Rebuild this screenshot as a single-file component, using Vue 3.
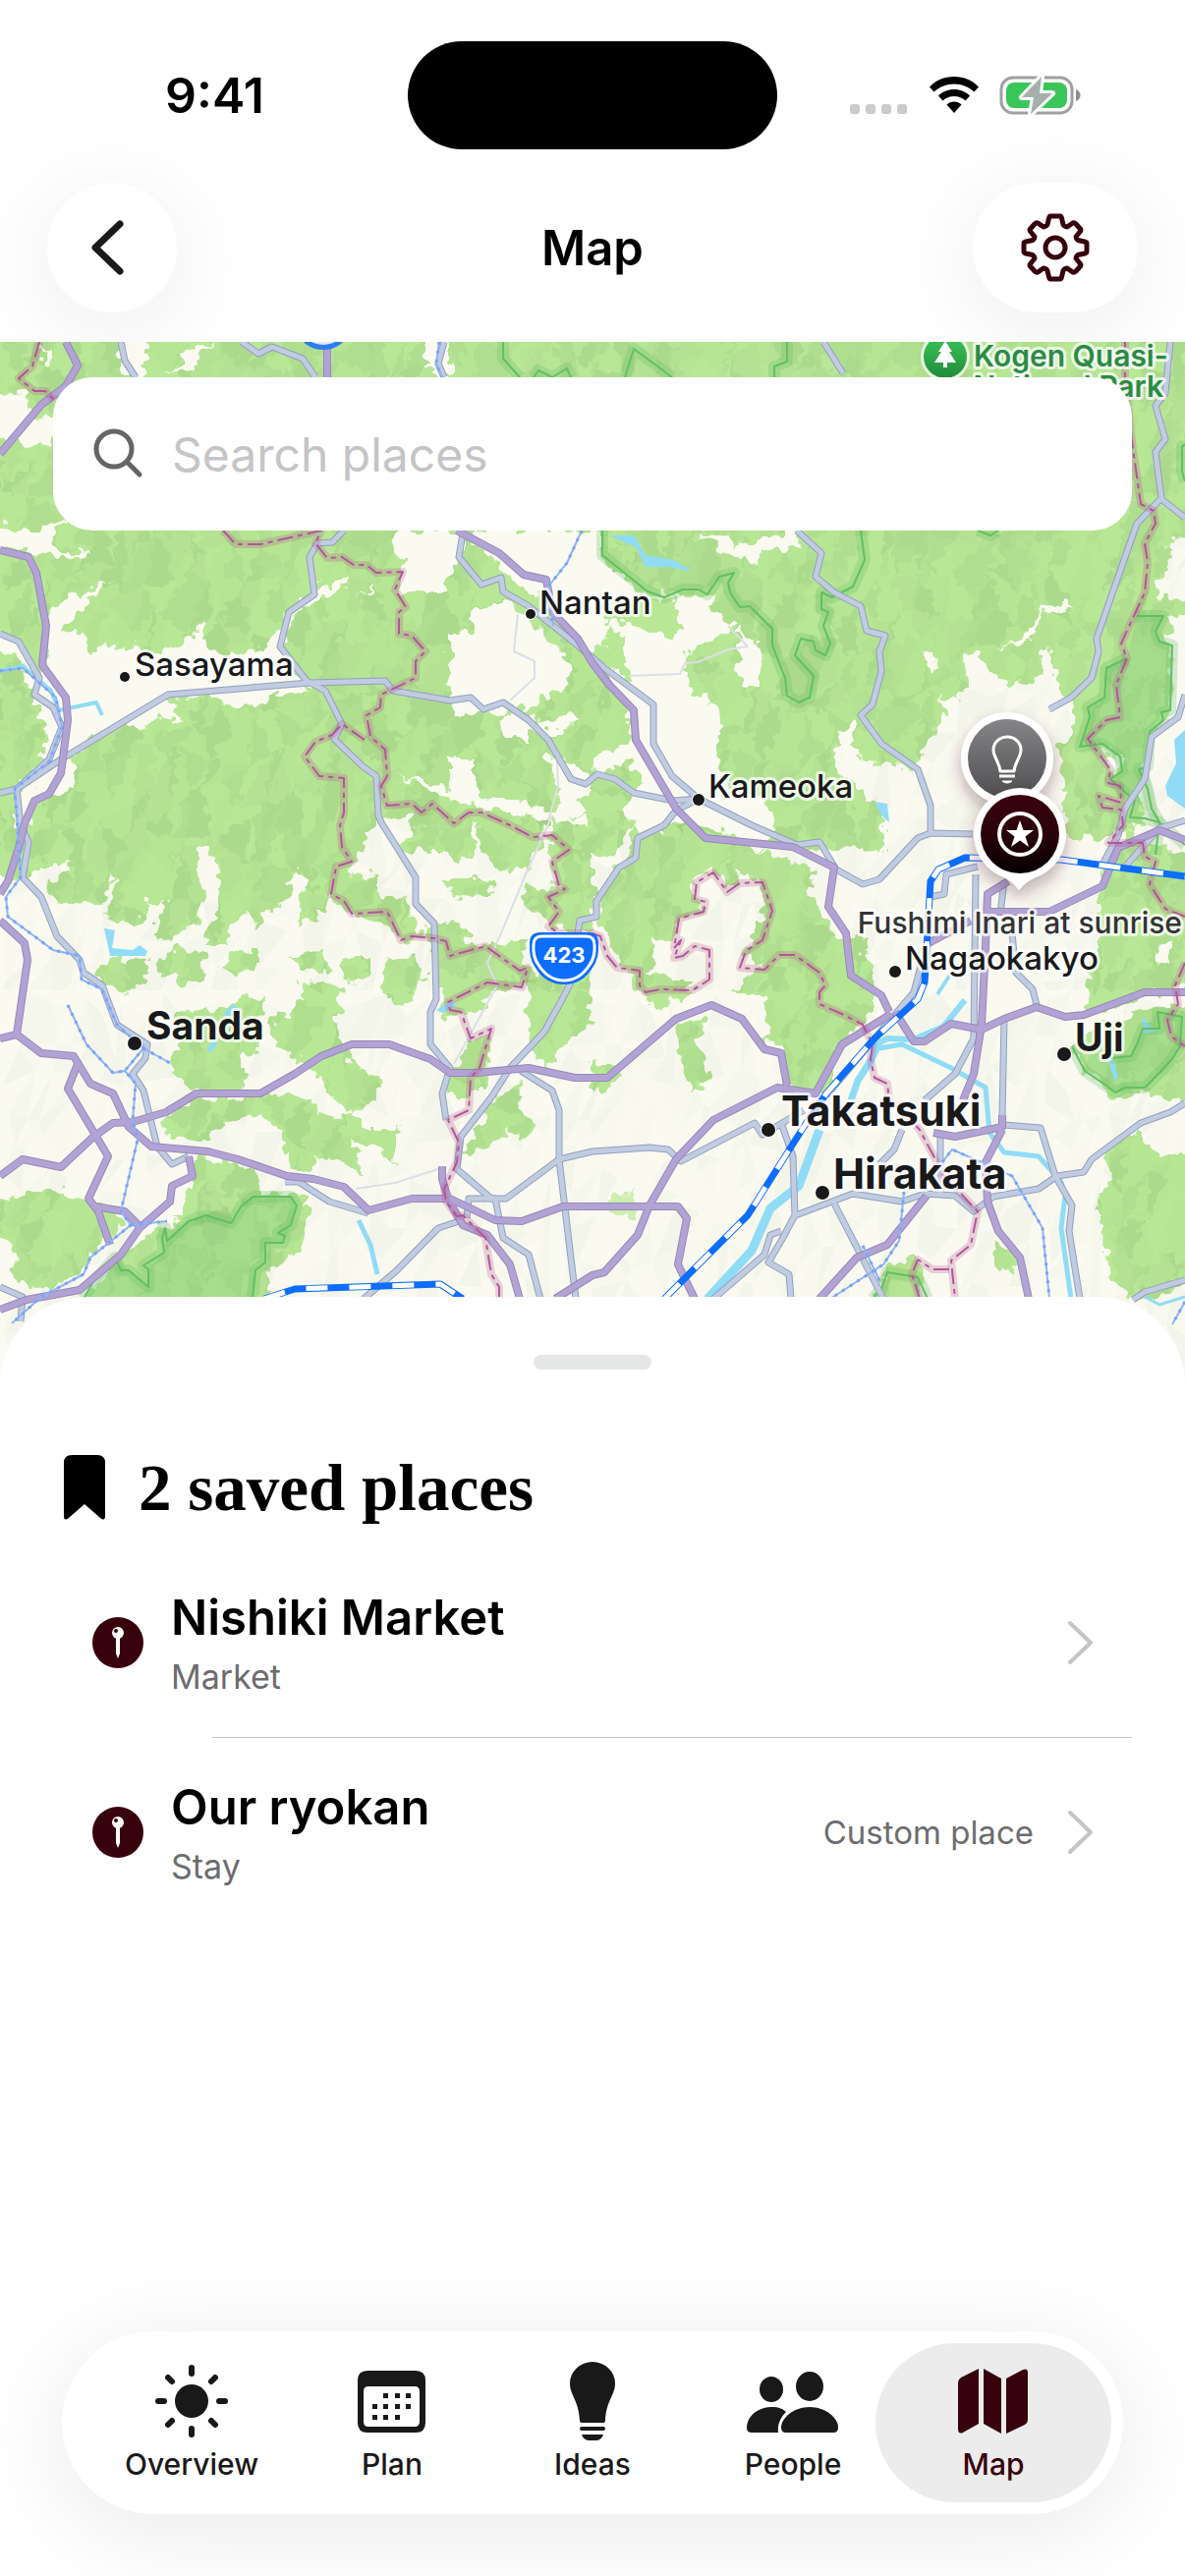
<script setup>
import { ref } from 'vue'

const query = ref('')
const activeTab = ref('map')

const tabs = [
  { id: 'overview', label: 'Overview' },
  { id: 'plan', label: 'Plan' },
  { id: 'ideas', label: 'Ideas' },
  { id: 'people', label: 'People' },
  { id: 'map', label: 'Map' }
]

const places = [
  { id: 1, name: 'Nishiki Market', kind: 'Market', note: '' },
  { id: 2, name: 'Our ryokan', kind: 'Stay', note: 'Custom place' }
]

const towns = [
  { name: 'Nantan', x: 549, y: 625, dx: 540, dy: 625, r: 5, size: 'sm' },
  { name: 'Sasayama', x: 137, y: 688, dx: 127, dy: 689, r: 5, size: 'sm' },
  { name: 'Kameoka', x: 721, y: 812, dx: 711, dy: 814, r: 6, size: 'sm' },
  { name: 'Nagaokakyo', x: 921, y: 987, dx: 911, dy: 989, r: 6, size: 'sm' },
  { name: 'Sanda', x: 149, y: 1058, dx: 137, dy: 1062, r: 7, size: 'md' },
  { name: 'Uji', x: 1094, y: 1070, dx: 1083, dy: 1073, r: 7, size: 'md' },
  { name: 'Takatsuki', x: 795, y: 1146, dx: 782, dy: 1150, r: 7, size: 'lg' },
  { name: 'Hirakata', x: 848, y: 1210, dx: 837, dy: 1214, r: 7, size: 'lg' }
]

// forest areas
const forest = [
  'M-20 328H1226V545L1190 550L1192 570L1180 590L1176 608L1206 610V625L1192 630L1190 660L1192 720L1180 735L1175 755L1168 770L1160 800L1165 830L1150 850L1135 845L1120 855L1108 850L1098 858L1085 845L1082 790L1078 757L1091 750V717L1078 700L1065 657L1057 673L1055 693L1026 697L1000 670L985 665L982 700L972 713L955 710L963 730L951 747L941 757L938 773L925 783L905 776L880 777L868 767L857 750L850 785L870 800L899 822V868L870 863L830 865L790 855L770 868L718 860L711 845L645 833L640 850L620 870L603 868V840L560 835L540 850L500 835L460 840L430 830L385 835L375 850L360 880L340 900L335 917L325 933L304 940L302 917L317 897L302 887L292 897L296 908L279 927H269L262 947L254 927L233 943L231 958H210L213 940L223 930V890L212 860H202V885L210 910L204 920L200 940L175 953L158 960V930L171 919H152V925L140 940H127L109 932L112 910L119 893L115 890L104 919L56 918L50 902L63 885L77 875L58 880H40L29 892L-20 893Z',
  'M645 833L711 840L718 860L757 863L800 873L833 890L818 907L841 933L849 957L884 953L878 967L888 987L891 1017L887 1030L868 1050L849 1070V1110L811 1113L801 1093L795 1063L776 1060L784 1043L776 1017L745 1010L775 985L756 970L780 930L772 900L760 885L742 905L726 885L705 900L715 930L690 935L685 960L660 955L668 975L655 990L705 1000L700 1012L672 1028L645 1005L625 970L610 940L615 900L640 873Z',
  'M177 1033L200 1025L215 1033L240 1020L268 1013L267 1063L246 1077V1110L215 1113L190 1105L175 1085L173 1073L185 1060Z',
  'M96 987L112 977L150 973V1000L127 1010L104 1003Z',
  'M158 988L175 965L208 970L205 995L188 1003L172 992Z',
  'M227 985L240 968H262V985L240 993Z',
  'M304 1000L346 1003L342 1047L358 1083L390 1100L380 1120L358 1133L335 1117L319 1090L277 1063L275 1037L308 1020Z',
  'M292 973L327 970L338 990L312 987Z',
  'M165 1143L192 1117L246 1120L269 1113L315 1117L327 1137L358 1133L377 1150L408 1150L400 1183L377 1163H358L369 1193L338 1180L319 1177L315 1193L292 1190L285 1150L265 1137L231 1140L208 1163L169 1157Z',
  'M196 1180L215 1178L262 1193L265 1213L240 1240L210 1245L180 1240L196 1205Z',
  'M-20 1217L12 1220L30 1212L69 1213L85 1222L119 1230L123 1245L85 1290L60 1310L35 1312L15 1300L12 1265L-20 1250Z',
  'M80 1332L119 1280L165 1247L208 1237L254 1220L277 1213L312 1217L315 1240L300 1277L277 1290L270 1332Z',
  'M338 887L385 890V913L412 915L423 937L430 953L408 957L385 937L358 933L338 915Z',
  'M350 977L377 970V993L354 1000Z',
  'M392 977L425 973L433 997L412 1023L390 1017Z',
  'M433 945L462 937L480 960L538 957L530 977L550 1000L500 1010L485 1030L450 1035L442 990Z',
  'M452 893H500L502 910L470 913L452 905Z',
  'M419 830H480L484 863L465 883L454 867L410 867Z',
  'M485 830H560L540 880L515 888L490 870Z',
  'M560 835L603 840V950L562 945L531 917L535 903L565 905L560 860Z',
  'M535 990H600V1040L580 1060L555 1090L540 1070L535 1020Z',
  'M477 1063L500 1050L496 1100L477 1120L455 1113L458 1095Z',
  'M500 1120L531 1100L527 1130L546 1145L533 1163L520 1150L481 1177L470 1170L490 1143Z',
  'M688 1043L718 1037L710 1065L722 1097L703 1117L695 1083Z',
  'M603 1080L630 1085L625 1105L603 1115Z',
  'M1118 893L1135 870L1150 850L1226 880V1000L1170 1010L1130 1030H1105L1107 990L1120 940Z',
  'M1091 1060L1115 1045L1160 1030L1226 1020V1110L1190 1120L1170 1110L1135 1120L1105 1090Z',
  'M1122 1170L1153 1153L1180 1175L1226 1170V1290L1180 1322H1150L1126 1295L1117 1223L1130 1200Z',
  'M1014 1267L1037 1277L1030 1297L1010 1283Z',
  'M903 1290L937 1277L940 1332H888Z'
]

// open ground inside the forest
const clearings = [
  'M123 340H148V384H123Z',
  'M42 355H50L48 372L44 368Z',
  'M165 383L188 370L185 360L215 348L195 375Z',
  'M433 340H458V384H448L433 373Z',
  'M-20 403L25 398L28 420L60 430L50 450L30 455L15 445L-20 452Z',
  'M-20 532L23 540L42 537L69 528L50 553L62 562L92 564L80 568L54 565L29 562L-20 557Z',
  'M48 617L69 610L112 592L92 610L62 640L83 645L92 662L127 655L154 668L185 655L210 635L204 653L231 668L262 663L281 647L294 623L308 612L327 587L323 603L354 588L358 593L327 610L292 633L288 660L308 693L319 697L262 713L240 720L215 707L170 710L185 733L165 730L142 743L131 733L88 753L77 770L73 803L50 810L38 803L30 840H16L20 800L45 770L48 740L30 700L20 670L-20 650V643L18 653L42 690L50 660Z',
  'M408 540H473L465 573L454 587V605H408V567L400 552Z',
  'M480 540H612V570L650 603L690 606L728 605L725 622L749 640L703 660L697 675L702 700L728 717L733 735L730 770L740 800L782 815L790 842L770 868L740 848L700 835L655 850L635 822L655 795L640 775L603 790L602 770L640 760V720L603 670L575 640L545 605L520 590L500 570L480 550Z',
  'M481 620L500 615L527 615L546 640L584 675L575 700L530 722L488 727H458V645H481Z',
  'M710 545L745 565L770 573L775 560L817 560L810 540L790 545L765 555L735 548Z',
  'M752 640L776 660L772 697L757 699L752 680Z',
  'M1012 662L1040 648L1062 620L1085 613L1090 620L1065 625L1045 652Z',
  'M938 660L955 673L950 687L942 675Z',
  'M400 788L458 803V772H483V812L520 815L600 835V840L540 832L470 818Z',
  'M510 727L560 735L580 725L590 730L570 745H535V752H512Z',
  'M555 765L603 790V830H570L565 790Z',
  'M365 610L383 593L378 604L370 607Z',
  'M1125 765L1142 770L1138 790L1130 785Z',
  'M1180 960L1195 962L1190 985L1175 980Z',
  'M853 745L870 735L868 760L880 777L857 775Z'
]

const meadow = [
  'M618 1222L645 1210L652 1240L620 1236Z'
]

// wooded slopes that sit on top of the clearings
const groves = [
  'M612 622L628 612L660 608L690 610V645H668L645 640L632 632L618 632Z',
  'M516 612L545 604L560 590L548 640Z',
  'M484 592L500 562L512 590L530 600L532 612L500 612L484 618Z',
  'M612 655L622 635L638 652V680L622 676Z',
  'M603 655L612 660L645 680L640 690L603 672Z',
  'M585 815L603 808L640 812L632 828L600 835Z'
]

const parkFill = [
  'M85 1322L117 1280L131 1293L151 1310V1292L167 1275L170 1263L192 1243L210 1237L235 1245L258 1218L296 1218L302 1227L296 1247L288 1265H270V1285L260 1293L257 1322Z',
  'M1157 627H1184L1176 643L1180 653L1193 657L1191 723L1182 725L1170 745L1168 780L1180 837L1155 815L1130 793L1142 785L1122 757L1099 760L1109 730L1107 720L1124 710L1126 680L1147 670Z',
  'M1104 1090L1135 1112L1165 1107L1193 1078L1201 1065L1203 1035L1178 1030L1163 1047L1151 1075L1130 1077L1110 1070Z'
]

const parkLines = [
  'M512 348V365L529 384',
  'M543 384L548 377L562 384L577 375L581 384',
  'M636 384L645 355L668 372L684 384',
  'M801 348V368L788 373V384',
  'M613 540V565L659 602L676 608L695 600H711L720 605L732 587L747 583L741 593L743 603L753 618L763 617L786 640V657L799 690L801 708L813 715L824 710L828 688L809 667L815 650L828 653L830 662L840 667L845 655L838 637L843 623L836 620V603L847 608L868 597L880 570L876 540',
  'M995 540L1008 545L1016 540',
  'M1206 452L1203 455V480L1206 490',
  'M1157 627H1184L1176 643L1180 653L1193 657L1191 723L1182 725L1184 733L1170 745L1168 780L1159 783L1168 803L1172 823L1180 837L1206 860',
  'M1147 670L1126 680L1124 710L1107 720L1109 730L1099 760L1122 757L1140 770L1142 785L1130 793L1155 815L1150 832L1165 833L1180 837L1176 870',
  'M1091 1065L1104 1090L1126 1105L1135 1112L1145 1107H1165L1180 1092L1193 1078L1201 1065L1203 1035L1178 1030L1180 1047H1163L1157 1063L1151 1075L1130 1077',
  'M85 1322L96 1303L117 1280L123 1293H131L151 1310V1292L146 1288L167 1275L165 1260L168 1250L170 1263L192 1243L210 1237L235 1245L246 1227L258 1218H296L302 1227L296 1247L283 1255L290 1258L288 1265H270V1285L260 1293L257 1322',
  'M888 1322L897 1312L903 1295L934 1300L944 1322'
]

const lakes = [
  'M620 545H645L657 565L686 570L705 582L680 577H657L647 557Z',
  'M1206 743L1195 753L1197 777L1186 800L1188 810L1206 823Z',
  'M890 816L903 818L905 837L897 830Z',
  'M106 945L117 947L114 965L135 967L142 962L150 968L148 973L112 973Z',
  'M228 1030L238 1022L243 1028L232 1036Z',
  'M444 1028L460 1018L464 1024L450 1031Z',
  'M1162 1035L1178 1050L1164 1052Z'
]

const rivers = [
  { d: 'M720 1322L765 1273L784 1230L813 1207L834 1150', w: 9 },
  { d: 'M866 1120L873 1100L886 1080L895 1062', w: 7 },
  { d: 'M888 1065L903 1057L930 1058L960 1045L982 1018', w: 6 },
  { d: 'M895 1067L918 1063L968 1087L1003 1107L1007 1153L1022 1173L1057 1177L1080 1203L1084 1217L1080 1250L1090 1322', w: 5 },
  { d: 'M954 1012L967 992', w: 4 },
  { d: 'M365 1242L377 1267L384 1297', w: 5 },
  { d: 'M0 683L23 678L52 703L60 723L98 715L104 728', w: 4 },
  { d: 'M212 1070L220 1060', w: 5 },
  { d: 'M1130 1077L1136 1098', w: 5 },
  { d: 'M1165 1320L1180 1328L1206 1320', w: 3 }
]

const lanes = [
  'M562 830L535 890L510 950L496 980L506 1003L462 1083',
  'M446 1190L402 1204L362 1210',
  'M527 625L523 663L544 673V690L519 713',
  'M741 637L761 658L741 661L710 674L697 675L692 686L640 688',
  'M567 773L568 800L558 835'
]

const grayRoads = [
  'M123 348L127 367L138 384',
  'M246 348L263 360L277 353L308 365L321 384',
  'M452 348L446 370L452 384',
  'M350 540L338 552L323 553L315 567L320 605L294 623L285 658L312 693L331 703L348 737L340 752L369 780L383 790L385 830L388 837L423 893V920L442 940L444 1017L438 1030V1063L458 1087L450 1113L454 1140',
  'M0 807L17 803L62 773L171 707L315 695L392 693L400 703L458 713L479 710L492 722L512 715L538 733L558 753L581 793L596 798L608 788L626 793L645 807L685 815L711 813',
  'M0 645L19 653L40 690L35 707L54 720L63 740L50 773L17 803L21 840L29 857L23 893L42 913L58 953L81 977L85 990L104 1003L119 1043L150 1063L148 1077L135 1093L146 1110L160 1167L175 1185L192 1177',
  'M471 543L467 567L490 595L510 588L512 602L538 617L588 657L615 680L665 717V757L684 790L711 813L765 840L811 860L834 857L851 885L878 900L895 895L934 853L947 848L990 849',
  'M838 348L858 380',
  'M811 540L836 563L830 587L849 603L876 617L882 642L901 647L895 663L897 683L888 717L876 728L897 757L934 783L947 820V848',
  'M1191 348L1186 400L1176 413L1186 447L1176 460L1182 507L1157 533L1138 587L1116 650L1118 663L1111 690L1090 710L1068 722',
  'M1182 508L1206 527',
  'M1206 707L1199 730L1172 750L1165 793L1145 823L1138 850L1122 880',
  'M711 813L688 825L676 840L649 853L647 873L630 883L607 917V933L590 937L588 950',
  'M581 1000L569 1023L554 1050L519 1087L500 1117L469 1157L465 1190L500 1220H515L569 1180L603 1172L661 1168L680 1170L693 1182L768 1143L776 1155L818 1130',
  'M530 1090L562 1110L569 1130V1180L586 1322',
  'M475 1240L477 1220H504L512 1260L538 1277L550 1322',
  'M467 1243L446 1250L404 1293L370 1322',
  'M290 1203H304L335 1223L375 1235',
  'M795 1143L807 1177L809 1237L795 1263L782 1285L803 1297L805 1322',
  'M795 1253L784 1257L778 1277L726 1322',
  'M807 1238L868 1215L918 1223L941 1215L972 1217L991 1233L1011 1218L1057 1210L1076 1197L1103 1193L1111 1180L1161 1143L1191 1132L1206 1123',
  'M849 1225L899 1322',
  'M993 890L991 1057L972 1093L941 1120',
  'M918 1150L910 1170L895 1185',
  'M1022 1037L1020 1137',
  'M1022 1145L1059 1148L1074 1197L1091 1227L1088 1253L1099 1322',
  'M1018 930L1022 897',
  'M1030 950L1034 990L1051 1007L1055 1023',
  'M995 882L963 890L961 910L947 913',
  'M938 980L930 1010L841 1115',
  'M1153 1323L1165 1315L1206 1303',
  'M0 1310L23 1320L21 1345',
  'M957 1157V1215',
  'M1145 882L1180 843L1206 835'
]

const purpleRoads = [
  'M67 348L79 372L67 393L42 412L0 462',
  'M0 560L29 567L37 583L47 637L43 677L67 710L69 733L62 787L50 808L35 815L25 838L19 863L8 897L0 910',
  'M333 348V384',
  'M465 540L508 563L533 585L556 590L562 623L588 650L603 675L620 697L645 723L647 753L688 823L718 853L807 862L849 883L843 923L861 950L866 993L897 1013L905 1030',
  'M0 937L25 960L28 977L17 1053',
  'M0 1057L17 1053L42 1072L75 1075L92 1103L115 1113L131 1147L154 1167L212 1172L242 1180L292 1197L319 1200L350 1208L375 1232L419 1220H458L504 1242L531 1243L573 1228H690L699 1240L690 1287L707 1322',
  'M0 1197L23 1180L62 1188L94 1158L115 1143L135 1142L169 1132L200 1113H265L300 1093L327 1075L358 1063H396L438 1078L458 1092H485L538 1087L585 1097H618L688 1037L724 1023L755 1037L778 1068L795 1072L801 1105',
  'M79 1083L69 1108L110 1177L90 1220L100 1233L112 1267',
  'M96 1228L127 1233L142 1248',
  'M192 1177L196 1197L175 1207L173 1223L142 1250L123 1277L81 1313L27 1323L0 1333',
  'M565 1322L603 1298L615 1295L649 1257L661 1227L688 1180L726 1140L791 1107L830 1113L857 1063L907 1032',
  'M911 1030L930 1060H941L968 1042L999 1048L1022 1037L1055 1025L1084 1035L1103 1033L1165 1010H1206',
  'M1026 897L1005 910L1003 963L999 1043L991 1093L980 1120',
  'M1005 928H1068L1122 902L1138 863L1180 845L1206 855',
  'M988 937L945 960',
  'M950 1153L972 1157L1020 1147V1135',
  'M1020 1150L1003 1183L1005 1223L1016 1253L1038 1280L1047 1322',
  'M943 1217L903 1267L872 1280L834 1322',
  'M450 1187V1200L456 1220L471 1247L496 1257L519 1287L529 1322'
]

const borders = [
  'M40 348L33 373L19 385L35 398H46L55 407',
  'M227 540L240 554H265L327 540L321 553L333 568L348 567L360 575H373L383 583L410 582L402 600L413 618L406 623V645L419 647L433 663L423 673V690L388 707L387 720L373 728L377 750L392 763L394 790L388 800L394 820L419 818L429 827L440 818L462 838L477 827H490L519 840L542 852L562 850L579 865L562 877L569 902L575 905L558 913L569 928L558 943L569 950H603L611 953L618 973L628 985L651 988V1003L657 1010L672 1007L705 1008L722 997V967L707 963L695 973L686 975L693 957L686 965L691 935L716 928L718 918L707 915L709 898L726 888L740 908L753 899L776 898L786 927L776 957L759 968L753 985L778 987L793 972H809L834 990L840 1003L834 1010V1022L859 1033L878 1043L888 1063L886 1078L890 1097L903 1103L905 1120L918 1130L936 1150L961 1197L995 1233L988 1267L968 1283L972 1322',
  'M966 1292H949L934 1282L928 1297L936 1322',
  'M371 753L348 737L338 748L321 755L310 770L325 790L350 792V827L346 840L348 862L358 877L342 882L337 910L350 917L358 930L394 928L408 957L419 953L442 955L454 958L458 973L494 963L529 988L537 985L531 1005L496 1000L456 1020L458 1028L469 1030L479 1057L500 1047L488 1087L479 1097L477 1130L456 1140L467 1163L465 1183L452 1210L454 1223L465 1238L471 1237L494 1260L500 1297L508 1310V1322',
  'M1145 348V385L1153 457L1161 513L1174 520L1176 533L1165 553L1168 573L1165 603L1141 655L1147 670L1136 697L1140 730L1126 733L1107 752L1130 783L1128 797L1140 800L1141 817L1118 810L1122 822L1141 824L1143 840L1128 858H1163L1165 872L1176 877L1170 900L1186 925L1206 933',
  'M1206 980L1196 1003L1199 1022L1188 1038L1192 1055L1206 1065'
]

const dottedLines = [
  'M0 683L23 680L57 710L63 740L50 775L15 803L17 830L21 893L6 913L8 933L54 967L81 973L83 997L104 1007L119 1043L146 1067L127 1090L138 1103L135 1140L140 1160L123 1233L133 1247L92 1280L85 1297L42 1320L12 1347',
  'M69 1023L88 1063L115 1092L127 1090',
  'M146 1067L173 1082',
  'M133 1247L170 1243',
  'M592 540L577 573L558 597L563 637',
  'M447 348L444 370L450 384',
  'M920 1213L915 1263L899 1287L845 1322',
  'M878 1268L896 1305',
  'M959 1183L969 1170L1003 1185L1030 1197L1061 1250L1068 1322',
  'M1206 1325L1193 1348'
]

const railways = [
  'M269 1322L300 1312L448 1307L471 1322',
  'M676 1322L761 1237L818 1147L841 1113L890 1057L934 1017L941 1000L947 897L955 885L982 873L1080 875L1206 892'
]

// relief shading: a jittered grid of triangles, seeded so that every render is the same
const makeFacets = (cols, rows, cw, ch) => {
  let seed = 11
  const rnd = () => {
    seed = (seed * 16807) % 2147483647
    return seed / 2147483647
  }
  // grid points, with the last column and row wrapping onto the first
  const grid = []
  for (let r = 0; r < rows; r++) {
    grid.push([])
    for (let c = 0; c < cols; c++) {
      grid[r].push([rnd() * cw * 0.9, rnd() * ch * 0.9])
    }
  }
  const at = (r, c) => {
    const [jx, jy] = grid[r % rows][c % cols]
    return `${Math.round(c * cw + jx)} ${Math.round(r * ch + jy)}`
  }
  const list = []
  for (let r = 0; r < rows; r++) {
    for (let c = 0; c < cols; c++) {
      list.push({ d: `M${at(r, c)}L${at(r, c + 1)}L${at(r + 1, c)}Z`, tone: Math.floor(rnd() * 5) })
      list.push({ d: `M${at(r, c + 1)}L${at(r + 1, c + 1)}L${at(r + 1, c)}Z`, tone: Math.floor(rnd() * 5) })
    }
  }
  return list.filter((f) => f.tone > 0)
}
const facets = makeFacets(28, 14, 20, 36)
</script>

<template>
  <div class="page">
    <header class="top">
      <div class="status">
        <div class="status-side">9:41</div>
        <div class="island"></div>
        <div class="status-side status-icons">
          <svg width="60" height="40" viewBox="0 0 60 40" fill="#cbcacd">
            <rect v-for="n in 4" :key="n" :x="(n - 1) * 16" y="29" width="10" height="10" rx="3" />
          </svg>
          <svg width="52" height="40" viewBox="0 0 52 40">
            <path d="M26 1C16 1 7 5 1 11.500L5.500 16.500C11 11.500 18 8.500 26 8.500S41 11.500 46.500 16.500L51 11.500C45 5 36 1 26 1Z" />
            <path d="M26 14C19.500 14 14 16.500 10 20.500L14.500 25.500C17.500 22.500 21.500 21 26 21S34.500 22.500 37.500 25.500L42 20.500C38 16.500 32.500 14 26 14Z" />
            <path d="M26 26.500C23 26.500 20.500 27.500 18.500 29.500L26 38L33.500 29.500C31.500 27.500 29 26.500 26 26.500Z" />
          </svg>
          <svg width="84" height="44" viewBox="0 0 84 44">
            <rect x="2" y="4" width="72" height="36" rx="12" fill="#fff" stroke="#a0a0a0" stroke-width="3" />
            <rect x="7" y="9" width="62" height="26" rx="8" fill="#3ac659" />
            <path d="M78 16C84 18 84 26 78 28Z" fill="#8e8e90" />
            <path d="M43 3L23 24H35L32 41L54 20H41Z" fill="#a5b0aa" stroke="#fff" stroke-width="6" stroke-linejoin="round" paint-order="stroke" />
          </svg>
        </div>
      </div>
      <div class="toolbar">
        <button class="round-btn" aria-label="Back">
          <svg width="40" height="64" viewBox="0 0 40 64" fill="none" stroke="#1a1a1a" stroke-width="7" stroke-linecap="round" stroke-linejoin="round">
            <path d="M32 8L7 32L32 56" />
          </svg>
        </button>
        <h1>Map</h1>
        <button class="round-btn wide" aria-label="Settings">
          <svg width="72" height="72" viewBox="-36 -36 72 72" fill="none" stroke="#37020c" stroke-width="5" stroke-linejoin="round">
            <path d="M-5 -32H5Q6 -32 6.500 -30L8 -23.500Q9 -21.500 12 -21L17 -24.500Q19 -26 21 -24L25.500 -19Q26.500 -17.500 25 -16L21 -11Q21 -9 23 -7.500L30 -6Q32 -5.500 32 -4V4Q32 5.500 30 6L23 7.500Q21 9 21 11L25 16Q26.500 17.500 25.500 19L21 24Q19 26 17 24.500L12 21Q9 21.500 8 23.500L6.500 30Q6 32 5 32H-5Q-6 32 -6.500 30L-8 23.500Q-9 21.500 -12 21L-17 24.500Q-19 26 -21 24L-25.500 19Q-26.500 17.500 -25 16L-21 11Q-21 9 -23 7.500L-30 6Q-32 5.500 -32 4V-4Q-32 -5.500 -30 -6L-23 -7.500Q-21 -9 -21 -11L-25 -16Q-26.500 -17.500 -25.500 -19L-21 -24Q-19 -26 -17 -24.500L-12 -21Q-9 -21.500 -8 -23.500L-6.500 -30Q-6 -32 -5 -32Z" />
            <circle r="10" />
          </svg>
        </button>
      </div>
    </header>

    <section class="map">
      <svg class="map-canvas" viewBox="0 348 1206 1072" role="img" aria-label="Map around Kyoto">
        <defs>
          <pattern id="relief" width="560" height="504" patternUnits="userSpaceOnUse">
            <path v-for="(f, i) in facets" :key="i" :d="f.d" :class="'tone-' + f.tone" />
          </pattern>
          <filter id="ragged" filterUnits="userSpaceOnUse" x="-20" y="328" width="1246" height="1092" color-interpolation-filters="sRGB">
            <feTurbulence type="fractalNoise" baseFrequency="0.09" numOctaves="2" seed="3" />
            <feDisplacementMap in="SourceGraphic" scale="20" xChannelSelector="R" yChannelSelector="G" />
          </filter>
          <linearGradient id="pin-gray" x1="0" y1="0" x2="0" y2="1">
            <stop offset="0" stop-color="#858487" />
            <stop offset="1" stop-color="#504e50" />
          </linearGradient>
          <linearGradient id="pin-wine" x1="0" y1="0" x2="0" y2="1">
            <stop offset="0" stop-color="#3a030e" />
            <stop offset="0.5" stop-color="#2b020a" />
            <stop offset="1" stop-color="#020001" />
          </linearGradient>
          <linearGradient id="pin-park" x1="0" y1="0" x2="0" y2="1">
            <stop offset="0" stop-color="#38c558" />
            <stop offset="1" stop-color="#228a3c" />
          </linearGradient>
          <filter id="pin-shadow" x="-50%" y="-50%" width="200%" height="200%">
            <feDropShadow dx="0" dy="8" stdDeviation="8" flood-color="#4a2036" flood-opacity="0.35" />
          </filter>
        </defs>

        <rect class="ground" y="348" width="1206" height="1072" />
        <rect class="relief-faint" y="348" width="1206" height="1072" fill="url(#relief)" />
        <g filter="url(#ragged)">
          <path v-for="d in forest" :key="d" :d="d" class="forest" />
          <path v-for="d in forest" :key="'r' + d" :d="d" fill="url(#relief)" />
          <path v-for="d in clearings" :key="d" :d="d" class="ground" />
          <path v-for="d in groves" :key="d" :d="d" class="forest" />
          <path v-for="d in meadow" :key="d" :d="d" class="meadow" />
        </g>
        <path v-for="d in parkFill" :key="d" :d="d" class="park-fill" />
        <path v-for="d in lakes" :key="d" :d="d" class="water" />
        <path v-for="r in rivers" :key="r.d" :d="r.d" class="river" :stroke-width="r.w" />
        <path v-for="d in parkLines" :key="'b' + d" :d="d" class="park-band" />
        <path v-for="d in parkLines" :key="d" :d="d" class="park-line" />
        <path v-for="d in lanes" :key="d" :d="d" class="lane" />

        <path v-for="d in grayRoads" :key="'c' + d" :d="d" class="gray-case" />
        <path v-for="d in grayRoads" :key="d" :d="d" class="gray-road" />
        <path v-for="d in purpleRoads" :key="'c' + d" :d="d" class="purple-case" />
        <path v-for="d in purpleRoads" :key="d" :d="d" class="purple-road" />
        <path v-for="d in dottedLines" :key="d" :d="d" class="dotted" />
        <path v-for="d in dottedLines" :key="'d' + d" :d="d" class="dotted-dots" />
        <path v-for="d in borders" :key="'h' + d" :d="d" class="border-halo" />
        <path v-for="d in borders" :key="d" :d="d" class="border-line" />
        <path v-for="d in railways" :key="'c' + d" :d="d" class="rail" />
        <path v-for="d in railways" :key="d" :d="d" class="rail-dash" />

        <!-- road shields -->
        <ellipse cx="329" cy="338" rx="24" ry="18" fill="#2f7bf5" />
        <ellipse cx="329" cy="336" rx="20" ry="15" fill="#dfe9fb" />
        <path class="shield" d="M550 949H598Q609 949 609 960Q610 976 603 985Q593 1002 574 1002Q555 1002 545 985Q538 976 539 960Q539 949 550 949Z" />
        <path class="shield-line" d="M551 953H597Q605 953 605 962Q606 974 600 982Q590 998 574 998Q558 998 548 982Q542 974 543 962Q543 953 551 953Z" />
        <text class="shield-text" x="574" y="980">423</text>

        <!-- park label -->
        <circle cx="962" cy="363" r="25" fill="#fff" fill-opacity="0.7" />
        <circle cx="962" cy="363" r="22" fill="url(#pin-park)" />
        <path d="M962 347L955 358H958L951 369H960V374H964V369H973L966 358H969Z" fill="#fff" />
        <text class="park-text" x="991" y="373">Kogen Quasi-</text>
        <text class="park-text park-end" x="1184" y="404">National Park</text>

        <template v-for="t in towns" :key="t.name">
          <circle class="town-dot" :cx="t.dx" :cy="t.dy" :r="t.r" />
          <text class="town" :class="t.size" :x="t.x" :y="t.y">{{ t.name }}</text>
        </template>

        <!-- pins -->
        <g filter="url(#pin-shadow)">
          <circle cx="1025" cy="772" r="47" fill="#fff" />
        </g>
        <circle cx="1025" cy="772" r="40" fill="url(#pin-gray)" />
        <g fill="none" stroke="#fff" stroke-width="3" stroke-linejoin="round">
          <path d="M1018 785C1017 775 1011 771 1011 763A14 13 0 0 1 1039 763C1039 771 1033 775 1032 785Z" />
          <path d="M1017 790H1033" />
          <path d="M1020 795H1030Q1028 797 1025 797T1020 795Z" fill="#fff" stroke-width="1" />
        </g>
        <g filter="url(#pin-shadow)">
          <path d="M1038 802A47 47 0 0 1 1059 891Q1046 895 1037 906Q1029 895 1017 891A47 47 0 0 1 1038 802Z" fill="#fff" />
        </g>
        <circle cx="1038" cy="849" r="40" fill="url(#pin-wine)" />
        <circle cx="1038" cy="849" r="21" fill="none" stroke="#fff" stroke-width="4" />
        <path d="M1038 835L1041.500 845H1052L1043.500 851.500L1047 862L1038 855.500L1029 862L1032.500 851.500L1024 845H1034.500Z" fill="#fff" />
        <text class="pin-label" x="1203" y="950">Fushimi Inari at sunrise</text>
      </svg>

      <label class="search">
        <svg width="52" height="52" viewBox="0 0 52 52" fill="none" stroke="#656567" stroke-width="5" stroke-linecap="round">
          <circle cx="22" cy="21" r="18" />
          <path d="M35 34L48 47" />
        </svg>
        <input v-model="query" type="text" placeholder="Search places" aria-label="Search places" />
      </label>
    </section>

    <main class="sheet">
      <div class="handle"></div>
      <h2>
        <svg width="42" height="66" viewBox="0 0 42 66">
          <path d="M8 0H34Q42 0 42 8V62Q42 68 37 64L21 50L5 64Q0 68 0 62V8Q0 0 8 0Z" />
        </svg>
        2 saved places
      </h2>
      <ul class="places">
        <li v-for="place in places" :key="place.id">
          <a class="place" href="#">
            <svg width="52" height="52" viewBox="0 0 52 52">
              <circle cx="26" cy="26" r="26" fill="#37020c" />
              <circle cx="26" cy="16" r="6" fill="#fff" />
              <circle cx="24" cy="14" r="2" fill="#37020c" />
              <path d="M24 21H28V37L26 42L24 37Z" fill="#fff" />
            </svg>
            <span class="place-text">
              <span class="place-name">{{ place.name }}</span>
              <span class="place-kind">{{ place.kind }}</span>
            </span>
            <span class="place-note">{{ place.note }}</span>
            <svg width="28" height="48" viewBox="0 0 28 48" fill="none" stroke="#c5c5c7" stroke-width="4" stroke-linecap="round" stroke-linejoin="round">
              <path d="M3 4L24 24L3 44" />
            </svg>
          </a>
        </li>
      </ul>

      <nav class="tabs">
        <a
          v-for="tab in tabs"
          :key="tab.id"
          href="#"
          class="tab"
          :class="{ active: activeTab === tab.id }"
          @click.prevent="activeTab = tab.id"
        >
          <svg v-if="tab.id === 'overview'" width="76" height="80" viewBox="-38 -40 76 80">
            <circle r="17" />
            <g fill="none" stroke="currentColor" stroke-width="6" stroke-linecap="round">
              <path d="M0 -34V-28M0 28V34M-34 0H-28M28 0H34M-24 -24L-20 -20M20 20L24 24M24 -24L20 -20M-20 20L-24 24" />
            </g>
          </svg>
          <svg v-else-if="tab.id === 'plan'" width="70" height="80" viewBox="0 0 70 80">
            <path fill-rule="evenodd" d="M10 9H59Q69 9 69 19V62Q69 72 59 72H10Q0 72 0 62V19Q0 9 10 9ZM11 25Q6 25 6 30V61Q6 66 11 66H58Q63 66 63 61V30Q63 25 58 25Z" />
            <path d="M26 32h5v5h-5zM38 32h5v5h-5zM49 32h5v5h-5zM15 43h5v5h-5zM26 43h5v5h-5zM38 43h5v5h-5zM49 43h5v5h-5zM15 54h5v5h-5zM26 54h5v5h-5zM38 54h5v5h-5z" />
          </svg>
          <svg v-else-if="tab.id === 'ideas'" width="48" height="80" viewBox="0 0 48 80">
            <path d="M24 0A23 22 0 0 1 47 22C47 34 38 39 37 60Q37 62 35 62H13Q11 62 11 60C10 39 1 34 1 22A23 22 0 0 1 24 0Z" />
            <rect x="11" y="66" width="26" height="4" rx="2" />
            <path d="M13 74H35Q33 80 27 80H21Q15 80 13 74Z" />
          </svg>
          <svg v-else-if="tab.id === 'people'" width="94" height="80" viewBox="0 0 94 80">
            <ellipse cx="25" cy="28" rx="12" ry="13" />
            <ellipse cx="64" cy="25" rx="14" ry="15" />
            <path d="M25 46C33 46 37 48 40 51C34 57 31 64 32 72H5Q0 72 0 67C0 56 11 46 25 46Z" />
            <path d="M64 46C80 46 93 57 93 67Q93 72 88 72H40Q35 72 35 67C35 57 48 46 64 46Z" />
          </svg>
          <svg v-else width="72" height="80" viewBox="0 0 72 80">
            <path d="M0 21Q0 18 3 16L21 7V63L5 72Q0 74 0 68Z" />
            <path d="M26 7L44 17V73L26 63Z" />
            <path d="M49 17L66 8Q71 6 71 11V59Q71 62 68 64L49 73Z" />
          </svg>
          <span>{{ tab.label }}</span>
        </a>
      </nav>
    </main>
  </div>
</template>

<style>
body {
  margin: 0;
  background: #fff;
}
</style>

<style scoped>
.page {
  display: flex;
  flex-direction: column;
  min-height: 100vh;
  font-family: Inter, "Noto Sans", sans-serif;
  color: #000;
  overflow: hidden;
}

/* header */
.top {
  height: 348px;
}
.status {
  display: grid;
  grid-template-columns: 1fr 376px 1fr;
  align-items: center;
  padding-top: 42px;
}
.status-side {
  padding-left: 168px;
  font-size: 50px;
  font-weight: 600;
}
.status-icons {
  display: flex;
  align-items: center;
  gap: 20px;
  padding-left: 74px;
}
.island {
  height: 110px;
  border-radius: 55px;
  background: #000;
}
.toolbar {
  display: grid;
  grid-template-columns: 1fr auto 1fr;
  align-items: center;
  padding: 34px 48px 0;
}
.round-btn {
  display: flex;
  align-items: center;
  justify-content: center;
  width: 132px;
  height: 132px;
  padding: 0 8px 0 0;
  border: none;
  border-radius: 66px;
  background: #fff;
  box-shadow: 0 16px 100px rgba(0, 0, 0, 0.08);
}
.round-btn.wide {
  width: 168px;
  padding: 0;
  justify-self: end;
}
h1 {
  margin: 0;
  font-size: 49px;
  font-weight: 600;
}

/* map */
.map {
  position: relative;
}
.map-canvas {
  display: block;
  width: 100%;
}
.ground { fill: #fafaf1; }
.relief-faint { opacity: 0.3; }
.forest { fill: #b8e796; }
.meadow { fill: #cfeeb0; }
.tone-1 { fill: rgba(90, 130, 70, 0.02); }
.tone-2 { fill: rgba(90, 130, 70, 0.05); }
.tone-3 { fill: rgba(90, 130, 70, 0.09); }
.tone-4 { fill: rgba(90, 130, 70, 0.13); }
.park-fill { fill: rgba(110, 195, 110, 0.25); }
.water { fill: #90dcf6; }
.river, .park-band, .park-line, .lane, .gray-case, .gray-road, .purple-case,
.purple-road, .dotted, .dotted-dots, .border-halo, .border-line, .rail, .rail-dash {
  fill: none;
  stroke-linejoin: round;
}
.river { stroke: #90dcf6; }
.park-band { stroke: rgba(100, 185, 95, 0.25); stroke-width: 12px; }
.park-line { stroke: #62c062; stroke-width: 2px; }
.lane { stroke: #dddee6; stroke-width: 2px; }
.gray-case { stroke: #929fc0; stroke-width: 7px; }
.gray-road { stroke: #c1cce1; stroke-width: 5px; }
.purple-case { stroke: #9888b8; stroke-width: 8px; }
.purple-road { stroke: #b2a3d5; stroke-width: 6px; }
.dotted { stroke: #8fb3f7; stroke-width: 2px; }
.dotted-dots { stroke: #7ba4f5; stroke-width: 3px; stroke-dasharray: 3px 6px; }
.border-halo { stroke: rgba(175, 80, 135, 0.24); stroke-width: 8px; }
.border-line { stroke: #b3559c; stroke-width: 2px; stroke-dasharray: 16px 5px 5px 5px; }
.rail { stroke: #0d6dfd; stroke-width: 7px; }
.rail-dash { stroke: #fff; stroke-width: 5px; stroke-dasharray: 22px 22px; }
.shield { fill: #0d6dfd; }
.shield-line { fill: none; stroke: #fff; stroke-width: 3px; }
.shield-text {
  fill: #fff;
  font-size: 22px;
  font-weight: 700;
  text-anchor: middle;
}
.town-dot {
  fill: #19191a;
  stroke: #fff;
  stroke-width: 2px;
  paint-order: stroke;
}
.town, .park-text, .pin-label {
  fill: #19191a;
  stroke: rgba(255, 255, 255, 0.75);
  stroke-width: 6px;
  stroke-linejoin: round;
  paint-order: stroke;
}
.town.sm { font-size: 33px; font-weight: 500; }
.town.md { font-size: 39px; font-weight: 700; }
.town.lg { font-size: 43px; font-weight: 700; }
.park-text {
  fill: #2a8b46;
  font-size: 30px;
  font-weight: 600;
}
.park-end { text-anchor: end; }
.pin-label {
  fill: #333335;
  font-size: 30px;
  font-weight: 500;
  text-anchor: end;
}

.search {
  position: absolute;
  top: 36px;
  left: 54px;
  right: 54px;
  display: flex;
  align-items: center;
  gap: 29px;
  height: 156px;
  padding: 0 40px;
  box-sizing: border-box;
  border-radius: 40px;
  background: #fff;
}
.search input {
  flex: 1;
  min-width: 0;
  padding: 0;
  border: none;
  outline: none;
  background: transparent;
  font-family: inherit;
  font-size: 48px;
  color: #000;
}
.search input::placeholder {
  color: #c5c4c6;
  opacity: 1;
}

/* bottom sheet */
.sheet {
  position: relative;
  flex: 1;
  display: flex;
  flex-direction: column;
  margin-top: -100px;
  border-radius: 90px 90px 0 0;
  background: #fff;
}
.handle {
  width: 120px;
  height: 15px;
  margin: 59px auto 0;
  border-radius: 8px;
  background: #e5e6e6;
}
h2 {
  display: flex;
  align-items: center;
  gap: 34px;
  height: 80px;
  margin: 80px 65px 0;
  font-family: "Liberation Serif", serif;
  font-size: 67px;
  font-weight: 700;
}
.places {
  list-style: none;
  margin: 22px 54px 120px;
  padding: 0;
}
.places li + li::before {
  content: '';
  display: block;
  height: 1px;
  margin-left: 162px;
  background: #c8c8c8;
}
.place {
  display: flex;
  align-items: center;
  height: 192px;
  padding: 0 38px 0 40px;
  color: inherit;
  text-decoration: none;
}
.place-text {
  display: flex;
  flex-direction: column;
  flex: 1;
  margin-left: 28px;
  padding-top: 8px;
}
.place-name {
  font-size: 49px;
  font-weight: 600;
  line-height: 62px;
}
.place-kind, .place-note {
  font-size: 34px;
  line-height: 58px;
  color: #6c6c6e;
}
.place-note {
  margin-right: 34px;
  font-size: 33px;
}

/* tab bar */
.tabs {
  display: grid;
  grid-template-columns: repeat(5, 1fr);
  margin: auto 63px 63px;
  padding: 12px 30px;
  border-radius: 93px;
  box-shadow: 0 16px 100px rgba(0, 0, 0, 0.09);
}
.tab {
  display: flex;
  flex-direction: column;
  align-items: center;
  gap: 6px;
  height: 162px;
  padding-top: 19px;
  box-sizing: border-box;
  border-radius: 81px;
  color: #191919;
  fill: currentColor;
  font-size: 30px;
  font-weight: 500;
  text-decoration: none;
}
.tab.active {
  margin: 0 -18px;
  background: #ececec;
  color: #37020c;
}
</style>
